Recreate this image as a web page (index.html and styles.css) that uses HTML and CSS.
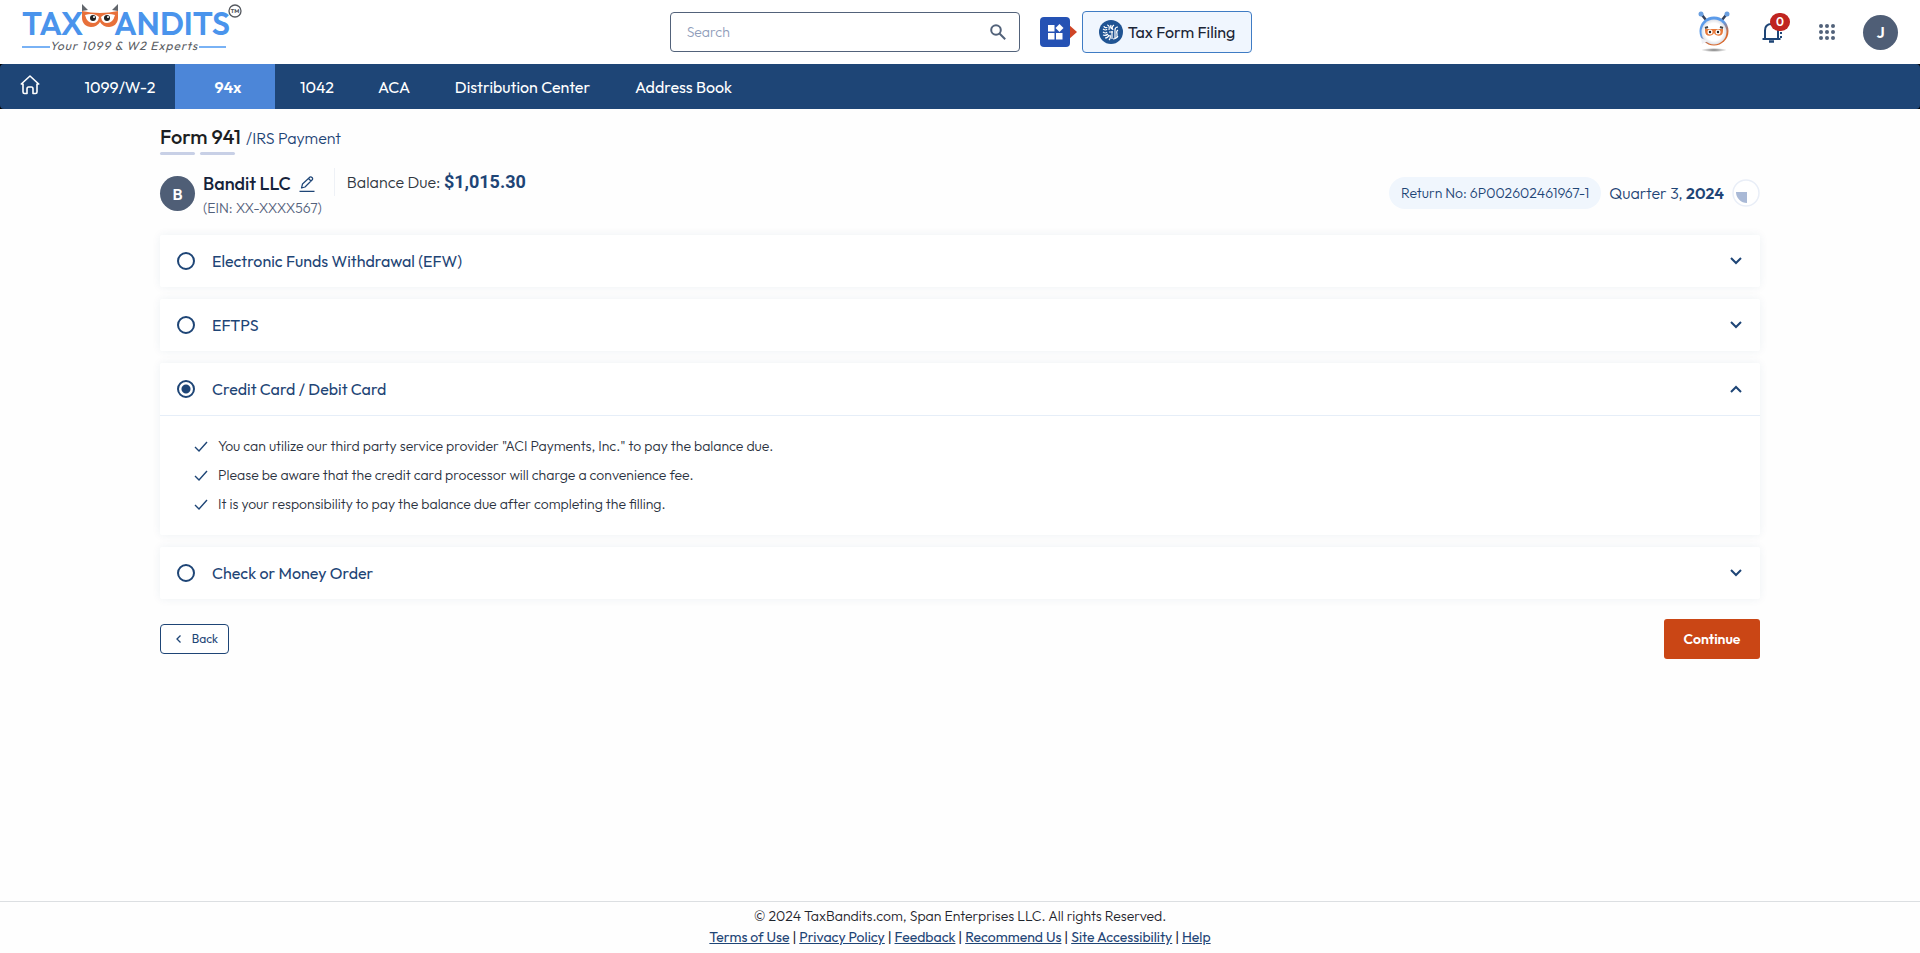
FILE: index.html
```html
<!DOCTYPE html>
<html lang="en">
<head>
<meta charset="utf-8">
<title>TaxBandits - IRS Payment</title>
<link rel="stylesheet" href="styles.css">
</head>
<body>
<header class="topbar">
  <a href="#" class="logo" aria-label="TaxBandits home">
    <svg width="224" height="56" viewBox="0 0 224 56">
      <g fill="#4a94ec" class="logo-text">
        <text x="0" y="35">TAX</text>
        <text x="92" y="35">ANDITS</text>
      </g>
      <path d="M60 11V4l6 6zM96 11V4l-6 6z" fill="#62666c"/>
      <path d="M60 11q18 4 36 0v7c0 5-4 9-9 9q-6 0-9-5-3 5-9 5c-5 0-9-4-9-9z" fill="#e8703a"/>
      <path d="M63 15q9-3 14 2-1 6-6 6-6 0-8-8zM93 15q-9-3-14 2 1 6 6 6 6 0 8-8z" fill="#fff"/>
      <circle cx="71" cy="18" r="3" fill="#222"/><circle cx="85" cy="18" r="3" fill="#222"/>
      <circle cx="72" cy="17" r="1" fill="#fff"/><circle cx="86" cy="17" r="1" fill="#fff"/>
      <circle cx="213" cy="11" r="6" fill="none" stroke="#55595f" stroke-width="1.300"/>
      <text x="213" y="13" text-anchor="middle" fill="#55595f" class="logo-tm">TM</text>
      <path d="M0 47h28M177 47h27" stroke="#79b2f5" stroke-width="2"/>
      <text x="102" y="50" text-anchor="middle" fill="#5a5d63" class="logo-tag">Your 1099 &amp; W2 Experts</text>
    </svg>
  </a>
  <div class="tools">
    <form class="search" role="search">
      <input type="search" class="search-input" placeholder="Search" aria-label="Search">
      <button type="button" class="icon-btn" aria-label="Submit search">
        <svg width="16" height="16" viewBox="0 0 16 16" fill="none" stroke="#52627a" stroke-width="2"><circle cx="6" cy="6" r="4.800"/><path d="M9.500 9.500l5.700 5.700"/></svg>
      </button>
    </form>
    <button type="button" class="apps-btn" aria-label="Products">
      <svg width="38" height="30" viewBox="0 0 38 30">
        <path d="M28 7l9 8-9 8z" fill="#cf4526"/>
        <rect width="30" height="30" rx="4" fill="#2552b4"/>
        <path d="M8 8h6.500v6.500H8zM8 16h6.500v6.500H8zM16 16h6.500v6.500H16zM19.500 7l4 4-4 4-4-4z" fill="#fff"/>
      </svg>
    </button>
    <button type="button" class="filing-btn">
      <svg width="24" height="24" viewBox="0 0 24 24">
        <circle cx="12" cy="12" r="12" fill="#205493"/>
        <g fill="none" stroke="#fff" stroke-width="1.200">
          <path d="M5 6c0 2 3 2 3 1M4 9q3 2 4 0M4 12q3 2 4 0M4 15q3 1 5-1M6 18q3 0 4-3M10 20q2-2 1-5M8 5q3 0 2 5M12 5q-1 3 1 4M15 5q-3 2-1 5M19 7q-3 0-3 3v8M19 10q-2 1-1 4v4M13 11v8M10 12h4M19 16q-2 3-5 3"/>
        </g>
      </svg>
      <span>Tax Form Filing</span>
    </button>
  </div>
  <div class="account">
    <button type="button" class="icon-btn" aria-label="Assistant">
      <svg width="34" height="42" viewBox="0 0 34 42">
        <defs>
          <linearGradient id="ring" x1="0" y1="0" x2="0.600" y2="1"><stop offset="0.500" stop-color="#5b9bea"/><stop offset="0.850" stop-color="#d8682c"/></linearGradient>
          <radialGradient id="face"><stop offset="0.700" stop-color="#fff"/><stop offset="1" stop-color="#dcdfe6"/></radialGradient>
          <radialGradient id="ground"><stop offset="0" stop-color="#777"/><stop offset="1" stop-color="#fff"/></radialGradient>
        </defs>
        <ellipse cx="17" cy="39" rx="13" ry="2" fill="url(#ground)"/>
        <path d="M5 4l4 5M29 4l-4 5" stroke="#33415c" stroke-width="2.500"/>
        <circle cx="4" cy="3" r="2.500" fill="#6a9fe0"/><circle cx="30" cy="3" r="2.500" fill="#6a9fe0"/>
        <circle cx="17" cy="20" r="14.500" fill="url(#ring)"/>
        <circle cx="17" cy="21" r="12.500" fill="url(#face)"/>
        <path d="M4 27l1 6 6-3z" fill="#f0f1f5"/>
        <path d="M8 17l3-1M26 17l-3-1" stroke="#444" stroke-width="2"/>
        <path d="M8 18h18v2c0 6-7 6-9 2-2 4-9 4-9-2z" fill="#e87a3b"/>
        <circle cx="13" cy="21" r="2.500" fill="#fff"/><circle cx="21" cy="21" r="2.500" fill="#fff"/>
        <circle cx="13" cy="21" r="1.200" fill="#222"/><circle cx="21" cy="21" r="1.200" fill="#222"/>
      </svg>
    </button>
    <button type="button" class="icon-btn bell" aria-label="Notifications">
      <svg width="22" height="22" viewBox="0 0 22 22" fill="none" stroke="#1e4576" stroke-width="2"><path d="M0.500 18h18M3 18V9.500Q3 3 9.500 3 16 3 16 9.500V18"/><path d="M7 20.500h5" stroke-width="2.500"/><path d="M19 11v2M19 15v2"/></svg>
      <span class="badge">0</span>
    </button>
    <button type="button" class="icon-btn" aria-label="App menu">
      <svg width="18" height="18" viewBox="0 0 18 18" fill="#52627a"><circle cx="3" cy="3" r="2"/><circle cx="9" cy="3" r="2"/><circle cx="15" cy="3" r="2"/><circle cx="3" cy="9" r="2"/><circle cx="9" cy="9" r="2"/><circle cx="15" cy="9" r="2"/><circle cx="3" cy="15" r="2"/><circle cx="9" cy="15" r="2"/><circle cx="15" cy="15" r="2"/></svg>
    </button>
    <button type="button" class="avatar">J</button>
  </div>
</header>
<div class="nav-wrap">
  <nav class="nav">
    <a href="#" class="nav-home" aria-label="Home">
      <svg width="20" height="20" viewBox="0 0 20 20" fill="none" stroke="#fff" stroke-width="1.600" stroke-linejoin="round" stroke-linecap="round"><path d="M3 9H1.300L10 1l8.700 8H17v8q0 1.500-1.500 1.500H13V14q0-2-1.500-2h-3Q7 12 7 14v4.500H4.500Q3 18.500 3 17z"/></svg>
    </a>
    <a href="#" class="nav-1099">1099/W-2</a>
    <a href="#" class="nav-94x">94x</a>
    <a href="#" class="nav-1042">1042</a>
    <a href="#" class="nav-aca">ACA</a>
    <a href="#" class="nav-dist">Distribution Center</a>
    <a href="#" class="nav-book">Address Book</a>
  </nav>
</div>
<main class="page">
  <div class="crumbs">
    <h1 class="title">Form 941</h1>
    <span class="crumb">/IRS Payment</span>
  </div>
  <div class="bars"><i></i><i></i></div>
  <section class="summary">
    <div class="avatar">B</div>
    <div class="business">
      <div class="name-row">
        <h2 class="name">Bandit LLC</h2>
        <button type="button" class="icon-btn" aria-label="Edit business">
          <svg width="16" height="16" viewBox="0 0 16 16" fill="none" stroke="#1e4576" stroke-width="1.200" stroke-linejoin="round"><path d="M2.500 12l1-4 7.500-7q1-.5 2 .5t.5 2l-7.500 7.500zM9.500 2.500l2.500 2.500M0.500 15.300h15"/></svg>
        </button>
      </div>
      <div class="ein">(EIN: XX-XXXX567)</div>
    </div>
    <div class="balance">Balance Due: <strong class="amount">$1,015.30</strong></div>
    <div class="return">
      <span class="pill">Return No: 6P002602461967-1</span>
      <span>Quarter 3, <strong>2024</strong></span>
      <svg width="28" height="28" viewBox="0 0 28 28"><circle cx="14" cy="14" r="13" fill="#fff" stroke="#e9eef7" stroke-width="1.500"/><path d="M15 13v11A11 11 0 0 1 4 13z" fill="#a9b9d6"/></svg>
    </div>
  </section>
  <div class="methods">
    <section class="card">
      <div class="card-head">
        <input type="radio" name="method" id="efw" class="radio"><label for="efw">Electronic Funds Withdrawal (EFW)</label>
        <button type="button" class="icon-btn" aria-label="Expand EFW"><svg width="12" height="8" viewBox="0 0 12 8" fill="none" stroke="#1e4576" stroke-width="2"><path d="M1 1l5 5 5-5"/></svg></button>
      </div>
    </section>
    <section class="card">
      <div class="card-head">
        <input type="radio" name="method" id="eftps" class="radio"><label for="eftps">EFTPS</label>
        <button type="button" class="icon-btn" aria-label="Expand EFTPS"><svg width="12" height="8" viewBox="0 0 12 8" fill="none" stroke="#1e4576" stroke-width="2"><path d="M1 1l5 5 5-5"/></svg></button>
      </div>
    </section>
    <section class="card">
      <div class="card-head">
        <input type="radio" name="method" id="card" class="radio" checked><label for="card">Credit Card / Debit Card</label>
        <button type="button" class="icon-btn" aria-label="Collapse card"><svg width="12" height="8" viewBox="0 0 12 8" fill="none" stroke="#1e4576" stroke-width="2"><path d="M1 7l5-5 5 5"/></svg></button>
      </div>
      <ul class="notes">
        <li><svg width="14" height="11" viewBox="0 0 14 11" fill="none" stroke="#1e4576" stroke-width="1.400"><path d="M1 6l4 4 8-9"/></svg>You can utilize our third party service provider "ACI Payments, Inc." to pay the balance due.</li>
        <li><svg width="14" height="11" viewBox="0 0 14 11" fill="none" stroke="#1e4576" stroke-width="1.400"><path d="M1 6l4 4 8-9"/></svg>Please be aware that the credit card processor will charge a convenience fee.</li>
        <li><svg width="14" height="11" viewBox="0 0 14 11" fill="none" stroke="#1e4576" stroke-width="1.400"><path d="M1 6l4 4 8-9"/></svg>It is your responsibility to pay the balance due after completing the filling.</li>
      </ul>
    </section>
    <section class="card">
      <div class="card-head">
        <input type="radio" name="method" id="check" class="radio"><label for="check">Check or Money Order</label>
        <button type="button" class="icon-btn" aria-label="Expand check"><svg width="12" height="8" viewBox="0 0 12 8" fill="none" stroke="#1e4576" stroke-width="2"><path d="M1 1l5 5 5-5"/></svg></button>
      </div>
    </section>
  </div>
  <div class="actions">
    <button type="button" class="back"><svg width="5" height="8" viewBox="0 0 5 8" fill="none" stroke="#1e4576" stroke-width="1.300"><path d="M4.500.5L1 4l3.500 3.500"/></svg>Back</button>
    <button type="button" class="continue">Continue</button>
  </div>
</main>
<footer class="footer">
  <p>© 2024 TaxBandits.com, Span Enterprises LLC. All rights Reserved.</p>
  <p class="footer-links"><a href="#">Terms of Use</a> | <a href="#">Privacy Policy</a> | <a href="#">Feedback</a> | <a href="#">Recommend Us</a> | <a href="#">Site Accessibility</a> | <a href="#">Help</a></p>
</footer>
</body>
</html>
```
FILE: styles.css
```css
* { box-sizing: border-box; }
body {
  margin: 0;
  min-height: 100vh;
  display: flex;
  flex-direction: column;
  background: #fefefe;
  color: #1e4576;
  font: 16px/20px Outfit, Lato, sans-serif;
}
h1, h2, p, ul { margin: 0; padding: 0; }
button, input { font: inherit; color: inherit; }
button { cursor: pointer; }
svg { display: block; flex: none; }
a { color: inherit; }
.icon-btn { padding: 0; border: 0; background: none; position: relative; flex: none; }

.topbar {
  height: 64px;
  padding: 0 22px;
  display: grid;
  grid-template-columns: 1fr auto 1fr;
  align-items: center;
  background: #fff;
}
.logo { justify-self: start; height: 64px; }
.logo-text { font-size: 32px; font-weight: 600; }
.logo-tm { font-size: 6px; font-weight: 700; }
.logo-tag { font-size: 12px; font-style: italic; letter-spacing: 1px; }
.tools { display: flex; align-items: center; padding-left: 2px; }
.search {
  width: 350px;
  height: 40px;
  padding: 0 13px 0 16px;
  display: flex;
  align-items: center;
  border: 1px solid #52627a;
  border-radius: 4px;
  margin-right: 20px;
}
.search-input { flex: 1; min-width: 0; padding: 0; border: 0; outline: 0; background: none; font-size: 14px; font-weight: 300; }
.search-input::placeholder { color: #8f9dba; }
.apps-btn { padding: 0; border: 0; background: none; margin-right: 4px; }
.filing-btn {
  height: 42px;
  padding: 0 16px;
  display: flex;
  align-items: center;
  gap: 5px;
  border: 1px solid #3f7cc4;
  border-radius: 4px;
  background: #f0f6fe;
  color: #1b2536;
}
.account { justify-self: end; display: flex; align-items: center; }
.bell { margin: 0 34px 0 31px; }
.badge {
  position: absolute;
  left: 8px;
  top: -8px;
  width: 20px;
  height: 18px;
  border-radius: 9px;
  background: #c02420;
  color: #fff;
  font-size: 12px;
  line-height: 18px;
  font-weight: 600;
}
.avatar {
  width: 35px;
  height: 35px;
  flex: none;
  display: flex;
  align-items: center;
  justify-content: center;
  padding: 0;
  border: 0;
  border-radius: 50%;
  background: #4f5e76;
  color: #fff;
  font-weight: 600;
}
.account .avatar { margin-left: 27px; }

.nav-wrap { background: #000; }
.nav {
  height: 45px;
  display: flex;
  border-radius: 4px;
  background: #1e4576;
  color: #fff;
  font-weight: 400;
}
.nav a { display: flex; align-items: center; justify-content: center; text-decoration: none; }
.nav .nav-home { width: 60px; align-items: flex-start; padding-top: 11px; }
.nav .nav-1099 { width: 115px; padding-left: 5px; }
.nav .nav-94x { width: 100px; padding-left: 6px; background: #4c86d8; font-weight: 600; }
.nav-1042 { width: 84px; }
.nav-aca { width: 70px; }
.nav-dist { width: 187px; }
.nav-book { width: 135px; }

.page { flex: 1; width: 83.333%; margin: 0 auto; padding-top: 16px; }
.crumbs { display: flex; align-items: baseline; gap: 5px; line-height: 24px; }
.crumb { font-weight: 300; }
.title { font-size: 20px; line-height: 24px; font-weight: 500; color: #1c1e22; }
.bars { display: flex; gap: 5px; padding-top: 2px; }
.bars i { width: 35px; height: 3px; border-radius: 2px; background: #c8d0e6; }
.summary { display: flex; align-items: flex-start; padding-top: 13px; height: 80px; font-weight: 300; }
.summary > .avatar { margin: 8px 8px 0 0; }
.name-row { display: flex; align-items: center; gap: 8px; height: 31px; }
.name { font-size: 18px; line-height: 24px; font-weight: 500; color: #16223a; }
.ein { font-size: 14px; line-height: 18px; color: #52607a; }
.balance {
  margin-left: 12px;
  padding-left: 12px;
  border-left: 1px solid #eef1f6;
  line-height: 28px;
  color: #30363f;
}
.amount { font-family: Roboto, sans-serif; font-size: 18px; font-weight: 700; color: #1e4576; }
.return { margin: 9px 0 0 auto; display: flex; align-items: center; gap: 8px; }
.return strong { font-weight: 600; }
.pill {
  padding: 0 12px;
  border-radius: 16px;
  background: #f0f6fd;
  font-size: 14px;
  line-height: 32px;
}

.methods { display: grid; gap: 12px; }
.card { background: #fff; box-shadow: 0 0 10px #1e457612; border-radius: 2px; }
.card-head { height: 52px; padding: 0 18px 0 17px; display: flex; align-items: center; }
.card-head label { flex: 1; padding-left: 17px; }
.radio {
  appearance: none;
  width: 18px;
  height: 18px;
  margin: 0;
  border: 2px solid #1e4576;
  border-radius: 50%;
}
.radio:checked { background: radial-gradient(circle, #1e4576 4px, transparent 5px); }
.notes {
  list-style: none;
  border-top: 1px solid #e6eef8;
  padding: 16px 34px;
  font-size: 14px;
  font-weight: 300;
  line-height: 29px;
  color: #2b3240;
}
.notes li { display: flex; align-items: center; gap: 10px; }
.actions { display: flex; align-items: center; justify-content: space-between; padding: 20px 0; }
.back {
  width: 69px;
  height: 30px;
  padding: 0 10px 0 15px;
  display: flex;
  align-items: center;
  justify-content: space-between;
  border: 1px solid #1e4576;
  border-radius: 4px;
  background: #fff;
  font-size: 12px;
}
.continue {
  width: 96px;
  height: 40px;
  padding: 0;
  border: 0;
  border-radius: 3px;
  background: #ca4615;
  color: #fff;
  font-size: 14px;
  font-weight: 600;
}
.footer {
  padding: 4px 0 5px;
  border-top: 1px solid #dcdfe2;
  text-align: center;
  font-size: 14px;
  font-weight: 300;
  line-height: 21px;
  color: #1e242c;
}
.footer-links { font-weight: 400; }
.footer a { color: #1e4576; }
```
